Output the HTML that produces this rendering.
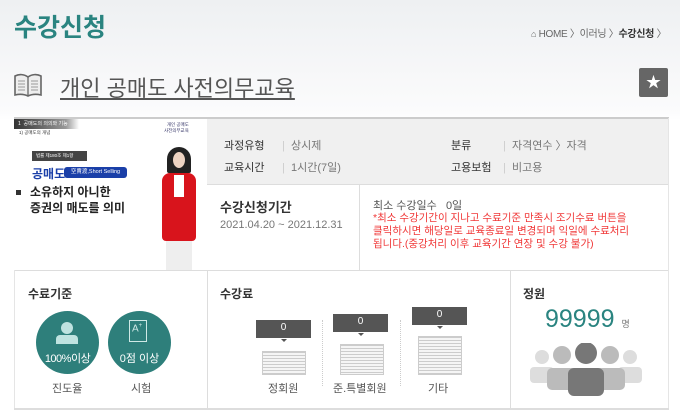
<!DOCTYPE html><html><head><meta charset="utf-8"><style>
*{margin:0;padding:0;box-sizing:border-box}
body{width:680px;height:419px;overflow:hidden;font-family:"Liberation Sans","Noto Sans CJK KR",sans-serif;background:linear-gradient(#eef0f2 0,#fbfbfc 110px,#fff 120px);position:relative;color:#333}
.a{position:absolute}
.t:after{content:"";position:absolute;left:50%;bottom:-4px;margin-left:-3px;border:3px solid transparent;border-top-color:#555;border-bottom:0}
</style></head><body>
<div class="a" style="left:14px;top:8px;font-size:25px;font-weight:bold;color:#2a8480">수강신청</div>
<div class="a" style="left:531px;top:25px;font-size:10px;color:#666;white-space:nowrap;letter-spacing:-0.3px"><span style="font-size:9px">&#8962;</span> HOME 〉이러닝 〉<b style="color:#333">수강신청</b> 〉</div>
<svg class="a" style="left:14px;top:72px" width="28" height="26" viewBox="0 0 28 26"><path d="M1 4c4-2 9-2 13 1c4-3 9-3 13-1v19c-4-1-9-1-13 1c-4-2-9-2-13-1z" fill="#eee" stroke="#666" stroke-width="1.6"/><path d="M14 5v19" stroke="#666" stroke-width="1.3"/><path d="M4 9h7M4 12h7M4 15h7M4 18h7M17 9h7M17 12h7M17 15h7M17 18h7" stroke="#999" stroke-width="1"/></svg>
<div class="a" style="left:60px;top:71px;font-size:22px;color:#555;text-decoration:underline">개인 공매도 사전의무교육</div>
<div class="a" style="left:639px;top:68px;width:29px;height:29px;background:#666;border-radius:2px;color:#fff;font-size:15px;text-align:center;line-height:29px">★</div>
<div class="a" style="left:14px;top:117px;width:655px;height:2px;background:#ccc"></div>
<div class="a" style="left:14px;top:119px;width:193px;height:151px;background:#fff;overflow:hidden">
<div class="a" style="left:0;top:0;width:65px;height:10px;background:linear-gradient(90deg,#333,#999 80%,#fff);color:#fff;font-size:5px;padding-left:4px;line-height:10px">1 &nbsp;공매도의 의의와 기능</div>
<div class="a" style="left:5px;top:11px;font-size:4.5px;color:#333">1) 공매도의 개념</div>
<div class="a" style="left:150px;top:3px;font-size:4.5px;color:#336;text-align:right;line-height:6px">개인 공매도<br>사전의무교육</div>
<div class="a" style="left:18px;top:32px;width:55px;height:10px;background:#444;color:#fff;font-size:4.5px;line-height:10px;padding-left:4px">법률 제180조 제1항</div>
<div class="a" style="left:18px;top:46px;font-size:12px;font-weight:bold;color:#1a3fa8">공매도</div>
<div class="a" style="left:50px;top:48px;width:63px;height:11px;background:#1a3fa8;border-radius:3px;color:#fff;font-size:5.5px;line-height:11px;text-align:center">空賣渡,Short Selling</div>
<div class="a" style="left:2px;top:71px;width:5px;height:5px;background:#333"></div>
<div class="a" style="left:16px;top:65px;font-size:12px;font-weight:bold;color:#222;line-height:16px">소유하지 아니한<br>증권의 매도를 의미</div>
<div class="a" style="left:153px;top:28px;width:24px;height:26px;border-radius:12px 12px 2px 2px;background:#222"></div>
<div class="a" style="left:159px;top:33px;width:12px;height:16px;border-radius:50%;background:#edd3c2"></div>
<div class="a" style="left:148px;top:54px;width:34px;height:68px;background:#d8141c;border-radius:8px 8px 4px 4px"></div>
<div class="a" style="left:160px;top:56px;width:10px;height:22px;background:#fff"></div>
<div class="a" style="left:152px;top:122px;width:26px;height:30px;background:#eee"></div>
</div>
<div class="a" style="left:207px;top:119px;width:462px;height:66px;background:#f0f0f0;border-bottom:1px solid #ddd"></div>
<div class="a" style="left:224px;top:135px;font-size:11px;line-height:22px;color:#333">과정유형<br>교육시간</div>
<div class="a" style="left:282px;top:135px;font-size:11px;line-height:22px;color:#777"><span style="color:#ccc">|</span>&nbsp; 상시제<br><span style="color:#ccc">|</span>&nbsp; 1시간(7일)</div>
<div class="a" style="left:451px;top:135px;font-size:11px;line-height:22px;color:#333">분류<br>고용보험</div>
<div class="a" style="left:503px;top:135px;font-size:11px;line-height:22px;color:#777"><span style="color:#ccc">|</span>&nbsp; 자격연수 〉자격<br><span style="color:#ccc">|</span>&nbsp; 비고용</div>
<div class="a" style="left:220px;top:197px;font-size:13px;font-weight:bold;color:#333">수강신청기간</div>
<div class="a" style="left:220px;top:219px;font-size:11px;color:#777">2021.04.20 ~ 2021.12.31</div>
<div class="a" style="left:359px;top:185px;width:1px;height:85px;background:#ddd"></div>
<div class="a" style="left:373px;top:197px;font-size:11px;color:#555">최소 수강일수 &nbsp; 0일</div>
<div class="a" style="left:373px;top:212px;font-size:10.5px;line-height:13px;color:#f03838">*최소 수강기간이 지나고 수료기준 만족시 조기수료 버튼을<br>클릭하시면 해당일로 교육종료일 변경되며 익일에 수료처리<br>됩니다.(중강처리 이후 교육기간 연장 및 수강 불가)</div>
<div class="a" style="left:14px;top:270px;width:655px;height:1px;background:#ddd"></div>
<div class="a" style="left:14px;top:270px;width:1px;height:140px;background:#e5e5e5"></div>
<div class="a" style="left:207px;top:270px;width:1px;height:138px;background:#ddd"></div>
<div class="a" style="left:510px;top:270px;width:1px;height:138px;background:#ddd"></div>
<div class="a" style="left:668px;top:118px;width:1px;height:290px;background:#e5e5e5"></div>
<div class="a" style="left:14px;top:408px;width:655px;height:2px;background:#ddd"></div>
<div class="a" style="left:28px;top:285px;font-size:12px;font-weight:bold">수료기준</div>
<div class="a" style="left:36px;top:311px;width:63px;height:63px;border-radius:50%;background:#2e7f7b"></div>
<div class="a" style="left:61px;top:322px;width:12px;height:12px;border-radius:50%;background:#bfe3e0"></div>
<div class="a" style="left:56px;top:335px;width:22px;height:9px;border-radius:4px 4px 0 0;background:#bfe3e0"></div>
<div class="a" style="left:36px;top:350px;width:63px;text-align:center;color:#fff;font-size:11px;letter-spacing:-0.5px">100%이상</div>
<div class="a" style="left:108px;top:311px;width:63px;height:63px;border-radius:50%;background:#2e7f7b"></div>
<div class="a" style="left:129px;top:320px;width:18px;height:22px;border:1px solid #cfe9e6"></div>
<div class="a" style="left:132px;top:323px;color:#cfe9e6;font-size:10px">A<sup style="font-size:6px">+</sup></div>
<div class="a" style="left:108px;top:350px;width:63px;text-align:center;color:#fff;font-size:11px">0점 이상</div>
<div class="a" style="left:52px;top:380px;font-size:11px;color:#555">진도율</div>
<div class="a" style="left:131px;top:380px;font-size:11px;color:#555">시험</div>
<div class="a" style="left:220px;top:285px;font-size:12px;font-weight:bold">수강료</div>
<div class="a" style="left:322px;top:320px;width:1px;height:66px;border-left:1px dotted #ccc"></div>
<div class="a" style="left:400px;top:320px;width:1px;height:66px;border-left:1px dotted #ccc"></div>
<div class="a t" style="left:256px;top:320px;width:55px;height:18px;background:#555;color:#fff;font-size:10px;text-align:center;line-height:16px">0</div>
<div class="a t" style="left:333px;top:314px;width:55px;height:18px;background:#555;color:#fff;font-size:10px;text-align:center;line-height:16px">0</div>
<div class="a t" style="left:412px;top:307px;width:55px;height:18px;background:#555;color:#fff;font-size:10px;text-align:center;line-height:16px">0</div>
<div class="a" style="left:262px;top:351px;width:44px;height:24px;background:repeating-linear-gradient(#ccc 0 1px,#f5f5f5 1px 3px);border:1px solid #ccc"></div>
<div class="a" style="left:340px;top:344px;width:44px;height:31px;background:repeating-linear-gradient(#ccc 0 1px,#f5f5f5 1px 3px);border:1px solid #ccc"></div>
<div class="a" style="left:418px;top:336px;width:44px;height:39px;background:repeating-linear-gradient(#ccc 0 1px,#f5f5f5 1px 3px);border:1px solid #ccc"></div>
<div class="a" style="left:268px;top:380px;font-size:11px;color:#555">정회원</div>
<div class="a" style="left:333px;top:380px;font-size:11px;color:#555">준.특별회원</div>
<div class="a" style="left:428px;top:380px;font-size:11px;color:#555">기타</div>
<div class="a" style="left:523px;top:285px;font-size:12px;font-weight:bold">정원</div>
<div class="a" style="left:545px;top:305px;font-size:25px;color:#2a8480">99999 <span style="font-size:9px;color:#777">명</span></div>
<svg class="a" style="left:530px;top:343px" width="112" height="56" viewBox="0 0 112 56">
<g fill="#ddd"><circle cx="12" cy="14" r="7"/><circle cx="100" cy="14" r="7"/><rect x="0" y="24" width="24" height="16" rx="4"/><rect x="88" y="24" width="24" height="16" rx="4"/></g>
<g fill="#bbb"><circle cx="32" cy="12" r="9"/><circle cx="80" cy="12" r="9"/><rect x="17" y="25" width="30" height="22" rx="5"/><rect x="65" y="25" width="30" height="22" rx="5"/></g>
<g fill="#777"><circle cx="56" cy="10" r="11"/><rect x="38" y="25" width="36" height="28" rx="6"/></g>
</svg>
</body></html>
